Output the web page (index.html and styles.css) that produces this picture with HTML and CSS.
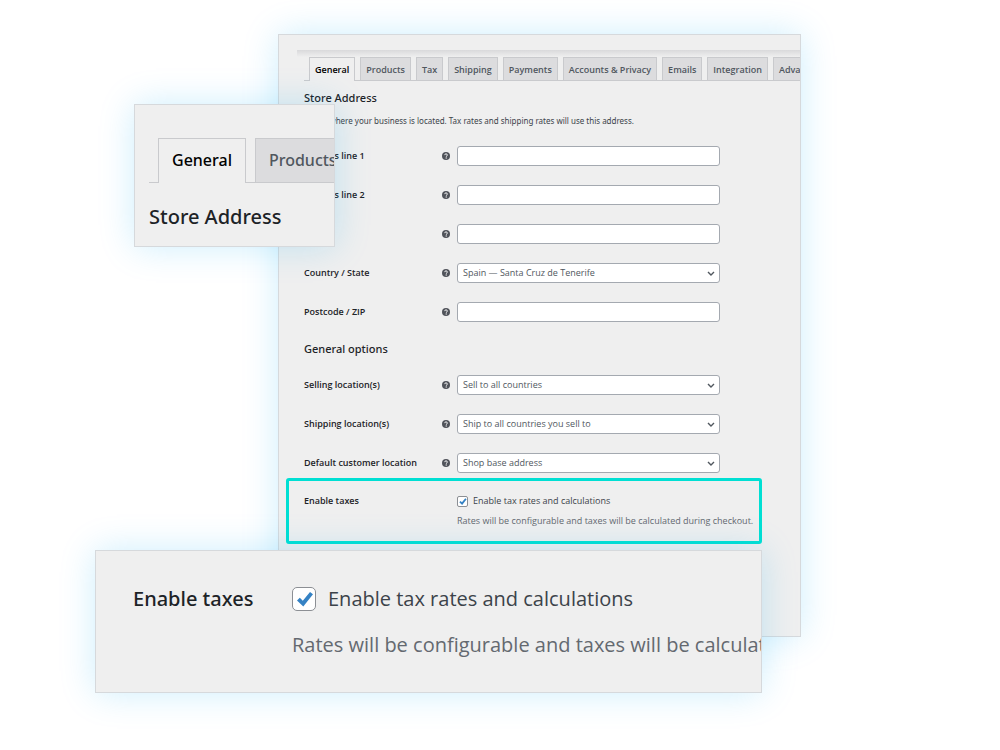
FILE: index.html
```html
<!DOCTYPE html>
<html lang="en">
<head>
<meta charset="utf-8">
<title>Store settings</title>
<link rel="stylesheet" href="styles.css">
</head>
<body>
<svg width="0" height="0" class="defs" aria-hidden="true">
  <symbol id="help" viewBox="0 0 16 16">
    <circle cx="8" cy="8" r="8" fill="#50535a"/>
    <path d="M5.400 6.200C5.400 4.500 6.500 3.700 8 3.700c1.600 0 2.700.9 2.700 2.300 0 1.900-2.200 1.900-2.200 3.500" fill="none" stroke="#f0f0f1" stroke-width="2"/>
    <circle cx="8.400" cy="12" r="1.300" fill="#f0f0f1"/>
  </symbol>
</svg>
<main class="scene">
  <section class="panel settings">
    <div class="topbar"></div>
    <nav class="tabs">
      <a class="tab active" href="#">General</a>
      <a class="tab" href="#">Products</a>
      <a class="tab" href="#">Tax</a>
      <a class="tab" href="#">Shipping</a>
      <a class="tab" href="#">Payments</a>
      <a class="tab" href="#">Accounts &amp; Privacy</a>
      <a class="tab" href="#">Emails</a>
      <a class="tab" href="#">Integration</a>
      <a class="tab" href="#">Advanced</a>
    </nav>
    <form class="form">
      <div class="group">
        <h2 class="heading">Store Address</h2>
        <p class="intro">This is where your business is located. Tax rates and shipping rates will use this address.</p>
        <div class="rows">
          <div class="row"><label class="label" for="a1">Address line 1</label><svg class="help"><use href="#help"/></svg><input class="field" id="a1" type="text"></div>
          <div class="row"><label class="label" for="a2">Address line 2</label><svg class="help"><use href="#help"/></svg><input class="field" id="a2" type="text"></div>
          <div class="row"><label class="label" for="city">City</label><svg class="help"><use href="#help"/></svg><input class="field" id="city" type="text"></div>
          <div class="row"><label class="label" for="country">Country / State</label><svg class="help"><use href="#help"/></svg><div class="pick"><select class="field" id="country"><option>Spain — Santa Cruz de Tenerife</option></select><svg class="chevron" viewBox="0 0 8 6"><path d="M1 1l3 3 3-3"/></svg></div></div>
          <div class="row"><label class="label" for="zip">Postcode / ZIP</label><svg class="help"><use href="#help"/></svg><input class="field" id="zip" type="text"></div>
        </div>
      </div>
      <div class="group options">
        <h2 class="heading">General options</h2>
        <div class="rows">
          <div class="row"><label class="label" for="sell">Selling location(s)</label><svg class="help"><use href="#help"/></svg><div class="pick"><select class="field" id="sell"><option>Sell to all countries</option></select><svg class="chevron" viewBox="0 0 8 6"><path d="M1 1l3 3 3-3"/></svg></div></div>
          <div class="row"><label class="label" for="ship">Shipping location(s)</label><svg class="help"><use href="#help"/></svg><div class="pick"><select class="field" id="ship"><option>Ship to all countries you sell to</option></select><svg class="chevron" viewBox="0 0 8 6"><path d="M1 1l3 3 3-3"/></svg></div></div>
          <div class="row"><label class="label" for="loc">Default customer location</label><svg class="help"><use href="#help"/></svg><div class="pick"><select class="field" id="loc"><option>Shop base address</option></select><svg class="chevron" viewBox="0 0 8 6"><path d="M1 1l3 3 3-3"/></svg></div></div>
        </div>
      </div>
      <div class="highlight">
        <span class="label">Enable taxes</span>
        <div class="tax">
          <div class="choice"><span class="box"><input class="check" id="tax" type="checkbox" checked><svg class="tick" viewBox="0 0 24 24"><path d="M5 13.500l2.800-2.700 3 3L18 5l3 2.200L11.300 19.500z"/></svg></span><label for="tax">Enable tax rates and calculations</label></div>
          <p class="note">Rates will be configurable and taxes will be calculated during checkout.</p>
        </div>
      </div>
    </form>
  </section>

  <section class="panel zoom-tabs">
    <nav class="tabs big">
      <a class="tab active" href="#">General</a>
      <a class="tab" href="#">Products</a>
    </nav>
    <h2 class="big-heading">Store Address</h2>
  </section>

  <section class="panel zoom-tax">
    <span class="big-label">Enable taxes</span>
    <div class="tax large">
      <div class="choice"><span class="box"><input class="check" id="tax-big" type="checkbox" checked><svg class="tick" viewBox="0 0 24 24"><path d="M5 13.500l2.800-2.700 3 3L18 5l3 2.200L11.300 19.500z"/></svg></span><label for="tax-big">Enable tax rates and calculations</label></div>
      <p class="note">Rates will be configurable and taxes will be calculated during checkout.</p>
    </div>
  </section>
</main>
</body>
</html>
```
FILE: styles.css
```css
* { box-sizing: border-box; }
body {
  margin: 0;
  background: #fff;
  color: #1d2327;
  font-family: "Open Sans", "Noto Sans", sans-serif;
  font-size: 9px;
  line-height: 12px;
}
h2, p { margin: 0; }
.defs { position: absolute; }
.scene {
  position: relative;
  min-height: 750px;
  padding: 34px 199px 34px 278px;
  overflow: hidden;
}
.panel {
  background: #efefef;
  border: 1px solid #d6d9dc;
  box-shadow: 0 0 34px rgba(0, 170, 245, 0.2);
  overflow: hidden;
}
.settings { padding: 15px 0 92px; }
.topbar {
  height: 7px;
  margin-left: 18px;
  background: linear-gradient(#d9d9db, #efefef);
}
.tabs {
  display: flex;
  gap: 5px;
  margin-left: 25px;
  padding-left: 5px;
  border-bottom: 1px solid #c9cacd;
}
.tab {
  flex: none;
  height: 23px;
  padding: 0 5px;
  border: 1px solid #c9cacd;
  border-bottom: 0;
  background: #dcdcde;
  color: #50575e;
  font-size: 9px;
  font-weight: 600;
  line-height: 23px;
  text-decoration: none;
}
.tab.active {
  height: 24px;
  margin-bottom: -1px;
  background: #efefef;
  color: #000;
}
.form { padding: 0 38px 0 7px; }
.group { padding-left: 18px; }
.heading {
  padding-top: 9px;
  font-family: "Noto Sans", "Open Sans", sans-serif;
  font-size: 11px;
  font-weight: 500;
  line-height: 16px;
}
.intro {
  margin: 9px 0 19px;
  color: #3c434a;
  font-family: "Noto Sans", "Open Sans", sans-serif;
  font-size: 8px;
  white-space: nowrap;
}
.rows { display: grid; gap: 19px; }
.row {
  display: grid;
  grid-template-columns: 138px 15px minmax(0, 263px);
  align-items: center;
}
.label { font-weight: 600; }
.help { width: 8px; height: 8px; }
.field {
  display: block;
  width: 100%;
  height: 20px;
  padding: 0 5px;
  border: 1px solid #a4a9b0;
  border-radius: 3px;
  background: #fff;
  color: #50575e;
  font: 9px/18px "Open Sans", "Noto Sans", sans-serif;
  appearance: none;
}
.pick { position: relative; }
.chevron {
  position: absolute;
  right: 5px;
  top: 8px;
  width: 8px;
  height: 6px;
  fill: none;
  stroke: #50575e;
  stroke-width: 1.4;
  pointer-events: none;
}
.options .heading { padding: 19px 0 18px; }
.highlight {
  display: flex;
  min-height: 66px;
  margin-top: 5px;
  padding: 14px 0 0 15px;
  border: 3px solid #00dfd3;
  border-radius: 3px;
}
.highlight .label { flex: none; width: 153px; }
.tax { min-width: 0; white-space: nowrap; color: #3c434a; }
.choice { display: flex; align-items: center; gap: 5px; }
.box { position: relative; flex: none; width: 11px; height: 11px; }
.check {
  display: block;
  width: 100%;
  height: 100%;
  margin: 0;
  border: 1px solid #8c8f94;
  border-radius: 2px;
  background: #fff;
  appearance: none;
}
.tick { position: absolute; inset: 0; fill: #3582c4; pointer-events: none; }
.note { margin-top: 8px; color: #646970; }

.zoom-tabs {
  position: absolute;
  left: 134px;
  top: 104px;
  width: 201px;
  height: 143px;
  padding-top: 33px;
  font-family: "Noto Sans", "Open Sans", sans-serif;
}
.big { gap: 9px; margin-left: 14px; padding-left: 9px; }
.big .tab {
  height: 44px;
  padding: 0 13px;
  font-size: 16px;
  font-weight: 500;
  line-height: 43px;
}
.big .tab.active { height: 45px; }
.big-heading {
  padding: 20px 14px;
  font-size: 20px;
  font-weight: 500;
  line-height: 28px;
}
.zoom-tax {
  position: absolute;
  left: 95px;
  top: 550px;
  width: 667px;
  height: 143px;
  padding: 34px 0 0 37px;
  display: flex;
}
.big-label {
  flex: none;
  width: 159px;
  font-family: "Noto Sans", "Open Sans", sans-serif;
  font-size: 20px;
  font-weight: 500;
  line-height: 28px;
}
.large { font-size: 20px; line-height: 28px; }
.large .choice { gap: 12px; }
.large .box { width: 24px; height: 24px; }
.large .check { border-radius: 5px; }
.large .note { margin-top: 18px; }
```
